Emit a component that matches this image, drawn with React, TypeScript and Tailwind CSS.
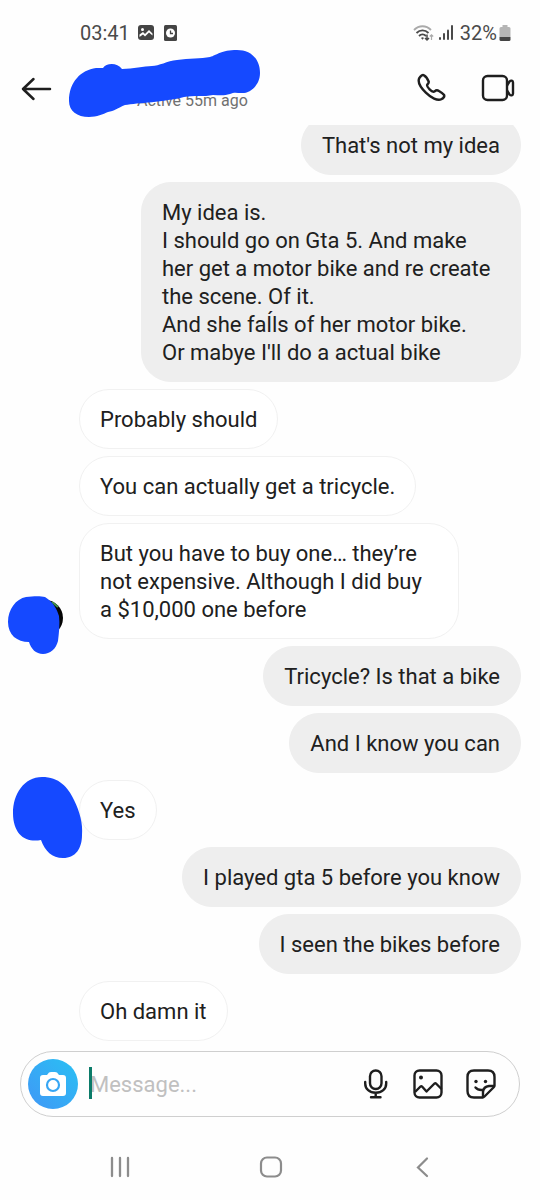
import type { ReactNode } from "react";

type Message = {
  text: string;
  mine?: boolean;
  avatar?: ReactNode;
};

function FirstAvatar() {
  return (
    <svg className="absolute bottom-[-17px] left-2 h-[60px] w-[56px]" viewBox="0 0 56 60" aria-hidden="true">
      <circle cx="37" cy="22" r="18" fill="#050505" />
      <path d="M44 6l6 5" stroke="#3f8f4a" strokeWidth="2" />
      <path
        d="M0 26C0 13 8 3 18 1C26 0 33 0 37 1C45 6 49 13 51 20C52 28 51 36 50 45C48 53 42 58 35 58C28 58 23 53 21 46C9 46 0 39 0 26Z"
        fill="#1549ff"
      />
    </svg>
  );
}

function SecondAvatar() {
  return (
    <svg className="absolute bottom-[-19px] left-[13px] h-[82px] w-[70px]" viewBox="0 0 70 82" aria-hidden="true">
      <path
        d="M0 36C0 17 11 0 29 0C46 0 55 10 61 23C67 35 70 47 69 58C69 71 63 81 50 81C39 81 32 74 28 63C13 66 0 58 0 36Z"
        fill="#1549ff"
      />
    </svg>
  );
}

const messages: Message[] = [
  { text: "That's not my idea", mine: true },
  {
    text: "My idea is.\nI should go on Gta 5. And make\nher get a motor bike and re create the scene. Of it.\nAnd she faĺls of her motor bike.\nOr mabye I'll do a actual bike",
    mine: true,
  },
  { text: "Probably should" },
  { text: "You can actually get a tricycle." },
  {
    text: "But you have to buy one… they’re not expensive. Although I did buy a $10,000 one before",
    avatar: <FirstAvatar />,
  },
  { text: "Tricycle? Is that a bike", mine: true },
  { text: "And I know you can", mine: true },
  { text: "Yes", avatar: <SecondAvatar /> },
  { text: "I played gta 5 before you know", mine: true },
  { text: "I seen the bikes before", mine: true },
  { text: "Oh damn it" },
];

function StatusBar() {
  return (
    <div className="flex h-[50px] items-center justify-between pt-4 pr-[29px] pl-20 text-[20px] leading-6 text-[#4a4a4a]">
      <div className="flex items-center">
        <span>03:41</span>
        <svg className="ml-2 h-4 w-4" viewBox="0 0 16 16" aria-hidden="true">
          <rect width="16" height="15" rx="3" fill="#444" />
          <circle cx="4.5" cy="4.5" r="1.5" fill="#fff" />
          <path d="M1.500 9.500l3.500-2.500 2 2 4-4 3.500 3.500v2l-3.500-3-4 4-2-2-3.500 2.500z" fill="#fff" />
        </svg>
        <svg className="ml-2 h-4 w-4" viewBox="0 0 16 16" aria-hidden="true">
          <rect x="2" width="13" height="16" rx="1.500" fill="#444" />
          <circle cx="8.500" cy="8" r="4.500" fill="#fff" />
          <path d="M8.500 5.500V8.500H11" fill="none" stroke="#444" strokeWidth="1.300" />
        </svg>
      </div>
      <div className="flex items-center">
        <svg className="h-[17px] w-[21px]" viewBox="0 0 21 17" fill="none" aria-hidden="true">
          <path d="M1 5C6 0 13 0 18 5" stroke="#aaa" strokeWidth="1.800" />
          <path d="M3.500 8C7 4.500 12 4.500 15.500 8" stroke="#4a4a4a" strokeWidth="1.800" />
          <path d="M6 11C8 9 11 9 13 11" stroke="#4a4a4a" strokeWidth="1.800" />
          <path d="M8 13q1.500-1.500 3 0l-1.500 1.800z" fill="#4a4a4a" />
          <path d="M14 9.500V15M12 13l2 2 2-2" stroke="#4a4a4a" strokeWidth="1.500" />
          <path d="M18.500 15V10M16.800 11.500l1.700-1.700 1.700 1.700" stroke="#aaa" strokeWidth="1.200" />
        </svg>
        <svg className="ml-1 h-4 w-4" viewBox="0 0 16 16" fill="#4a4a4a" aria-hidden="true">
          <rect x="1" y="12" width="2" height="3" rx="1" />
          <rect x="5" y="8" width="2" height="7" rx="1" />
          <rect x="9" y="4.500" width="2" height="10.500" rx="1" />
          <rect x="13" y="0" width="2" height="15" rx="1" />
        </svg>
        <span className="ml-[6px]">32%</span>
        <svg className="ml-[2px] h-4 w-3" viewBox="0 0 12 16" aria-hidden="true">
          <path d="M3.500 0h5v2h1.500a1.500 1.500 0 0 1 1.500 1.500V12H.5V3.500A1.500 1.500 0 0 1 2 2h1.500z" fill="#b5b5b5" />
          <path d="M.5 12h11v2.500A1.500 1.500 0 0 1 10 16H2a1.500 1.500 0 0 1-1.500-1.500z" fill="#444" />
        </svg>
      </div>
    </div>
  );
}

function ChatHeader() {
  return (
    <header className="flex h-[75px] items-center justify-between pr-6 pl-5">
      <div className="flex items-center">
        <button type="button" aria-label="Back">
          <svg
            className="h-8 w-8"
            viewBox="0 0 32 32"
            fill="none"
            stroke="#1e1e1e"
            strokeWidth="2.500"
            strokeLinecap="round"
            strokeLinejoin="round"
          >
            <path d="M30 17H3M13.500 7L3 17l10.500 10" />
          </svg>
        </button>
        <div className="relative ml-[85px] pt-[26px]">
          <p className="text-[16px] leading-5 text-[#707070]">Active 55m ago</p>
          {/* name is scribbled out */}
          <svg
            className="absolute bottom-[-8px] left-[-69px] h-[70px] w-[194px]"
            viewBox="0 0 194 70"
            aria-hidden="true"
          >
            <path
              d="M1 52C1 33 13 21 28 19L35 19C38 14 49 13 54 20C65 20 76 17 84 17C91 17 99 12 109 11C121 9 133 10 142 8C149 6 153 1 169 1C183 1 192 10 192 24C192 37 181 45 173 44C169 44 166 43 162 45C156 47 151 46 145 46C136 48 126 46 116 48C96 53 70 54 57 56C50 59 46 62 40 63C35 65 29 68 21 68C9 68 1 62 1 52Z"
              fill="#1549ff"
            />
          </svg>
        </div>
      </div>
      <div className="flex items-center gap-[34px] text-[#1e1e1e]">
        <button type="button" aria-label="Audio call">
          <svg
            className="h-[30px] w-[30px]"
            viewBox="0 0 32 32"
            fill="none"
            stroke="currentColor"
            strokeWidth="2.600"
            strokeLinejoin="round"
          >
            <path d="M3.500 5.500C5 3 7 1.500 8.500 2.500C10.500 3.500 12.500 6.500 13.500 9C14 10.500 13 11.500 12 12.500C11.500 13.500 12.500 15.500 14.500 17.500C16.500 19.500 18.500 20.500 20 19.500C21.500 18 23 18.200 24.500 19.200C27 20.700 29 22 30 23.500C30.500 25 29 27 27 28C23 30 16 26.500 10.500 21C5 15.500 1.500 9.500 3.500 5.500Z" />
          </svg>
        </button>
        <button type="button" aria-label="Video call">
          <svg
            className="h-8 w-9"
            viewBox="0 0 36 32"
            fill="none"
            stroke="currentColor"
            strokeWidth="2.400"
            strokeLinejoin="round"
          >
            <rect x="3" y="4" width="24" height="24" rx="4.500" />
            <path d="M27 13.500L29.500 9.500C31 8 33 8.500 33 10.500V21.500C33 23.500 31 24 29.500 22.500L27 18.500" />
          </svg>
        </button>
      </div>
    </header>
  );
}

function Bubble({ text, mine, avatar }: Message) {
  return (
    <li className={mine ? "relative flex justify-end pr-[19px]" : "relative flex pl-[79px]"}>
      <p
        className={
          mine
            ? "max-w-[380px] rounded-[30px] border border-[#eee] bg-[#eee] px-5 pt-4 pb-[14px] whitespace-pre-line"
            : "max-w-[380px] rounded-[30px] border border-[#f1f1f1] bg-white px-5 pt-4 pb-[14px] whitespace-pre-line"
        }
      >
        {text}
      </p>
      {avatar}
    </li>
  );
}

function MessageBox() {
  return (
    <form className="mx-5 mt-[10px] flex h-[66px] items-center rounded-full border border-[#cfcfcf] pr-[22px] pl-[7px]">
      <button
        type="button"
        aria-label="Camera"
        className="flex h-[50px] w-[50px] shrink-0 items-center justify-center rounded-full bg-linear-to-tr from-[#3f97f6] to-[#27c0f3]"
      >
        <svg className="h-7 w-7" viewBox="0 0 28 28" aria-hidden="true">
          <path
            d="M4 5H8L10 2.500Q11 2 12 2H16Q17 2 18 2.500L20 5H24Q27 5 27 8V23Q27 26 24 26H4Q1 26 1 23V8Q1 5 4 5Z"
            fill="#fff"
          />
          <circle cx="14" cy="15" r="6" fill="none" stroke="#36a6f4" strokeWidth="2.200" />
        </svg>
      </button>
      <div className="relative ml-3 min-w-0 flex-1">
        <input
          type="text"
          aria-label="Message"
          placeholder="Message..."
          className="block w-full pt-[2px] text-[22px] leading-8 outline-none placeholder:text-[#c0c0c0]"
        />
        <span className="absolute top-0 left-[-1px] h-8 w-[3px] bg-[#0b7b69]" />
      </div>
      <div className="flex items-center gap-[21px] text-[#1e1e1e]">
        <button type="button" aria-label="Voice message">
          <svg
            className="h-8 w-8"
            viewBox="0 0 32 32"
            fill="none"
            stroke="currentColor"
            strokeWidth="2.400"
            strokeLinecap="round"
          >
            <rect x="11" y="2.500" width="11.500" height="18.500" rx="5.700" />
            <path d="M6.200 14v1.500C6.200 21 10.500 24.800 16.700 24.800S27.200 21 27.200 15.500V14M16.700 25v4M12 29.300h9.500" />
          </svg>
        </button>
        <button type="button" aria-label="Gallery">
          <svg
            className="h-8 w-8"
            viewBox="0 0 32 32"
            fill="none"
            stroke="currentColor"
            strokeWidth="2.400"
            strokeLinejoin="round"
          >
            <rect x="2.500" y="2.500" width="27" height="27" rx="5" />
            <path d="M3 24L8.500 18.500Q9.500 18 10.500 19L14.500 23.500L22.500 15.500Q23.500 15 24.500 16L29.500 21" />
            <circle cx="9" cy="9.500" r="2" fill="currentColor" stroke="none" />
          </svg>
        </button>
        <button type="button" aria-label="Stickers">
          <svg
            className="h-8 w-8"
            viewBox="0 0 32 32"
            fill="none"
            stroke="currentColor"
            strokeWidth="2.400"
            strokeLinecap="round"
            strokeLinejoin="round"
          >
            <path d="M17.500 29.500H9Q2.500 29.500 2.500 23V9Q2.500 2.500 9 2.500H23Q29.500 2.500 29.500 9V17.500Q29.500 18.500 28.500 19.500L19.500 28.500Q18.500 29.500 17.500 29.500Z" />
            <path d="M18 29V24Q18.500 18.500 24 18H29M10.500 19.500Q13 22.500 17.500 22" />
            <circle cx="11" cy="13.500" r="1.700" fill="currentColor" stroke="none" />
            <circle cx="20.500" cy="13.500" r="1.700" fill="currentColor" stroke="none" />
          </svg>
        </button>
      </div>
    </form>
  );
}

function NavBar() {
  return (
    <nav className="mt-[34px] grid grid-cols-3 justify-items-center px-[45px] text-[#8c8c8c]">
      <button type="button" aria-label="Recent apps">
        <svg className="h-8 w-8" viewBox="0 0 32 32" fill="none" stroke="currentColor" strokeWidth="2.300" strokeLinecap="round">
          <path d="M8 7v18M16 7v18M24 7v18" />
        </svg>
      </button>
      <button type="button" aria-label="Home">
        <svg className="h-8 w-8" viewBox="0 0 32 32" fill="none" stroke="currentColor" strokeWidth="2.200">
          <rect x="7" y="6.500" width="20" height="19" rx="6" />
        </svg>
      </button>
      <button type="button" aria-label="Back to previous app">
        <svg className="h-8 w-8" viewBox="0 0 32 32" fill="none" stroke="currentColor" strokeWidth="2.200" strokeLinecap="round">
          <path d="M23 7.500L14 16.500l9 8.500" />
        </svg>
      </button>
    </nav>
  );
}

function App() {
  return (
    <div className="flex min-h-screen flex-col bg-[#fefefe] font-[Roboto,sans-serif] text-[#202020]">
      <StatusBar />
      <ChatHeader />
      <main className="overflow-hidden">
        <ul className="-mt-[10px] flex flex-col gap-[7px] text-[22px] leading-7">
          {messages.map((message) => (
            <Bubble key={message.text} {...message} />
          ))}
        </ul>
      </main>
      <MessageBox />
      <NavBar />
    </div>
  );
}

export default App;
